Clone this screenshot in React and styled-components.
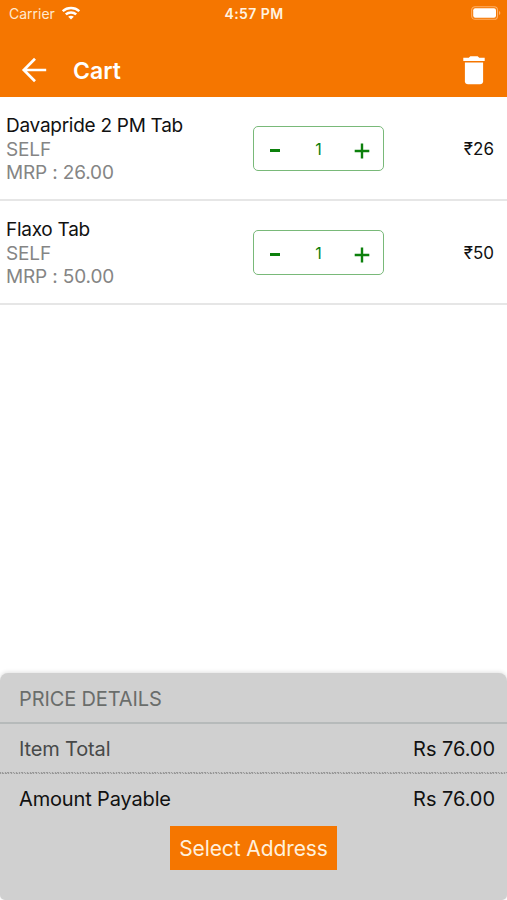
import React from "react";
import styled, { createGlobalStyle } from "styled-components";

const items = [
    { name: 'Davapride 2 PM Tab', brand: 'SELF', mrp: '26.00', qty: 1, price: 26 },
    { name: 'Flaxo Tab', brand: 'SELF', mrp: '50.00', qty: 1, price: 50 },
]

export default function App() {
    return (
        <Screen>
            <GlobalStyle />
            <StatusBar>
                <Carrier>
                    Carrier
                    <WifiIcon />
                </Carrier>
                <Clock>4:57 PM</Clock>
                <BatteryIcon />
            </StatusBar>

            <Header>
                <BackIcon />
                <Title>Cart</Title>
                <TrashIcon />
            </Header>

            <List>
                {items.map((item) => (
                    <Row key={item.name}>
                        <Info>
                            <Name>{item.name}</Name>
                            <Muted>{item.brand}</Muted>
                            <Muted>MRP : {item.mrp}</Muted>
                        </Info>
                        <Stepper>
                            <StepButton aria-label="Remove one"><StepBar /></StepButton>
                            <Quantity>{item.qty}</Quantity>
                            <StepButton aria-label="Add one"><PlusIcon /></StepButton>
                        </Stepper>
                        <Price>₹{item.price}</Price>
                    </Row>
                ))}
            </List>

            <Summary>
                <SummaryTitle>PRICE DETAILS</SummaryTitle>
                <SummaryRow $dotted>
                    <Label $color="#474949">Item Total</Label>
                    <Amount>Rs 76.00</Amount>
                </SummaryRow>
                <SummaryRow>
                    <Label $color="#111">Amount Payable</Label>
                    <Amount>Rs 76.00</Amount>
                </SummaryRow>
                <SelectButton>Select Address</SelectButton>
            </Summary>
        </Screen>
    )
}

function WifiIcon() {
    return (
        <svg width="18" height="14" viewBox="0 0 18 14" fill="none" stroke="#fff" strokeWidth="2.5">
            <path d="M0.7 5.2C5.2 0.9 12.8 0.9 17.3 5.2" />
            <path d="M3.8 8.4C6.7 5.7 11.3 5.7 14.2 8.4" />
            <path d="M9 13.6L6.2 10.8C7.7 9.3 10.3 9.3 11.8 10.8Z" fill="#fff" stroke="none" />
        </svg>
    )
}

function BatteryIcon() {
    return (
        <svg width="31" height="14" viewBox="0 0 31 14">
            <rect x="0.7" y="0.7" width="25.8" height="12.6" rx="3.4" fill="none" stroke="#ffb066" strokeWidth="1.1" />
            <rect x="2.2" y="2.3" width="22.8" height="9.4" rx="2" fill="#fff" />
            <path d="M28 5C29.8 5.6 29.8 8.4 28 9Z" fill="#ffb066" />
        </svg>
    )
}

function BackIcon() {
    return (
        <svg width="26" height="26" viewBox="0 0 26 26" fill="none" stroke="#fff" strokeWidth="2.7">
            <path d="M14 1.8L2.8 13L14 24.2M2.8 13H25.2" />
        </svg>
    )
}

function TrashIcon() {
    return (
        <svg width="22" height="29" viewBox="0 0 22 29" fill="#fff">
            <path d="M0.3 1.7H5.8L7.3 0.2H14.7L16.2 1.7H21.7V4.9H0.3Z" />
            <path d="M1.9 6.4H20.1V25.2C20.1 27 18.8 28.2 17 28.2H5C3.2 28.2 1.9 27 1.9 25.2Z" />
        </svg>
    )
}

function PlusIcon() {
    return (
        <svg width="16" height="16" viewBox="0 0 16 16" stroke="#0c800c" strokeWidth="2.4">
            <path d="M0.7 8H15.3M8 0.6V15.4" />
        </svg>
    )
}

const orange = '#f57600';
const green = '#0c800c';

const GlobalStyle = createGlobalStyle`
    * {
        box-sizing: border-box;
    }

    body {
        margin: 0;
        background: #fff;
        font-family: Inter, "Liberation Sans", sans-serif;
    }
`

const Screen = styled.div`
    width: 100%;
    height: 100vh;
    display: flex;
    flex-direction: column;
    overflow: hidden;
`

const StatusBar = styled.div`
    height: 28px;
    padding: 0 5px 2px 9px;
    display: grid;
    grid-template-columns: 1fr auto 1fr;
    align-items: center;
    background: ${orange};
    color: #fff;

    > svg {
        justify-self: end;
    }
`

const Carrier = styled.div`
    display: flex;
    align-items: center;
    gap: 7px;
    font-size: 14px;
    color: #ffe9cf;
`

const Clock = styled.div`
    padding: 1px 3px 0 0;
    font-size: 14px;
    font-weight: 600;
    letter-spacing: 0.4px;
    color: #fff3e2;
`

const Header = styled.header`
    height: 69px;
    padding: 16px 22px 0 21px;
    display: flex;
    align-items: center;
    background: ${orange};

    svg:first-child {
        margin-bottom: 1px;
    }
`

const Title = styled.h1`
    flex: 1;
    margin: 0 0 0 26px;
    font-size: 23px;
    font-weight: 600;
    color: #fff;
`

const List = styled.div`
    flex: 1;
`

const Row = styled.div`
    height: 104px;
    padding: 0 13px 0 6px;
    display: grid;
    grid-template-columns: 247px 131px 1fr;
    align-items: center;
    border-bottom: 2px solid #e6e6e6;
`

const Info = styled.div`
    padding-top: 3px;
    font-size: 19px;
    line-height: 23.6px;
`

const Name = styled.div`
    color: #111;
    letter-spacing: -0.27px;
`

const Muted = styled.div`
    color: #858585;
    letter-spacing: -0.15px;
`

const Stepper = styled.div`
    height: 45px;
    display: grid;
    grid-template-columns: 41px 1fr 43px;
    align-items: center;
    border: 1px solid #79b979;
    border-radius: 5px;
`

const StepButton = styled.button`
    height: 100%;
    padding: 5px 0 0;
    border: 0;
    background: none;
    display: flex;
    align-items: center;
    justify-content: center;
`

const StepBar = styled.span`
    width: 10px;
    height: 3px;
    background: ${green};
`

const Quantity = styled.div`
    padding: 1px 0 0 2px;
    text-align: center;
    font-size: 16px;
    color: ${green};
`

const Price = styled.div`
    padding-top: 2px;
    text-align: right;
    font-size: 17px;
    color: #111;
`

const Summary = styled.section`
    height: 227px;
    display: flex;
    flex-direction: column;
    background: #d0d0d0;
    border-radius: 8px 8px 5px 5px;
    box-shadow: 0 -1px 4px rgba(0, 0, 0, 0.12);
`

const SummaryTitle = styled.h2`
    height: 51px;
    margin: 0;
    padding-left: 19px;
    font-size: 20px;
    font-weight: 400;
    line-height: 52px;
    letter-spacing: -0.12px;
    color: #6a6d6b;
    border-bottom: 2px solid #b6baba;
`

const SummaryRow = styled.div`
    height: 50px;
    padding: 0 12px 0 19px;
    display: flex;
    align-items: center;
    justify-content: space-between;
    font-size: 20px;
    background: ${({ $dotted }) => ($dotted
        ? 'repeating-linear-gradient(60deg, #999 0 1.2px, #c6c6c6 1.2px 2.4px) 0 100% / 100% 2px no-repeat'
        : 'none')};
`

const Label = styled.span`
    color: ${({ $color }) => $color};
    letter-spacing: -0.15px;
`

const Amount = styled.span`
    color: #111;
    letter-spacing: -0.05px;
`

const SelectButton = styled.button`
    align-self: center;
    width: 167px;
    height: 44px;
    margin-top: 2px;
    padding: 0;
    border: 0;
    background: ${orange};
    color: #fff0dc;
    font-family: inherit;
    font-size: 21px;
    letter-spacing: -0.1px;
    white-space: nowrap;
`
